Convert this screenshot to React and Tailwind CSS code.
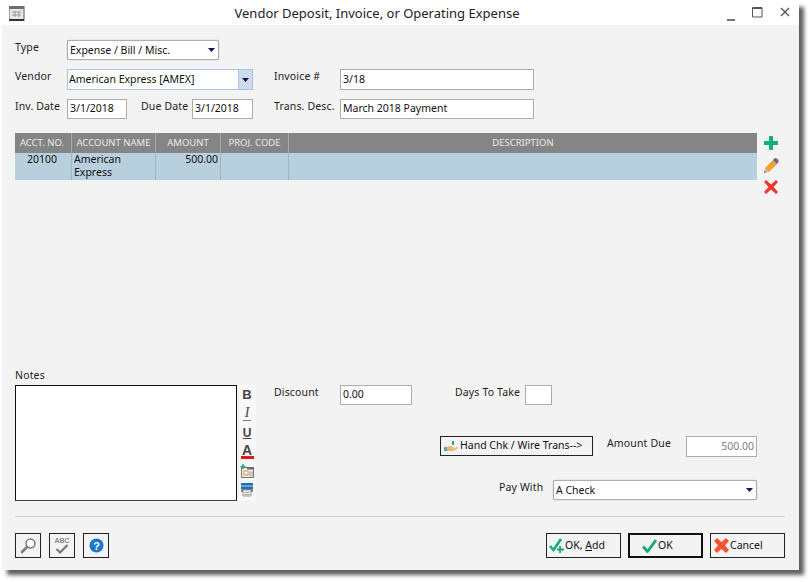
const font = "font-['Noto_Sans',sans-serif]";

function Label({ children, className = "" }) {
  return <div className={`text-[10.5px] leading-[14px] text-[#222] tracking-[0.15px] whitespace-nowrap shrink-0 ${className}`}>{children}</div>;
}

function Field({ children, className = "", right = false, muted = false }) {
  return (
    <div className={`h-[20px] bg-white border border-[#a9adb0] flex items-center px-[2px] text-[10.5px] whitespace-nowrap shrink-0 ${right ? "justify-end" : ""} ${muted ? "text-[#808080]" : "text-[#111]"} ${className}`}>
      {children}
    </div>
  );
}

function Caret() {
  return <svg width="7" height="4" viewBox="0 0 7 4" className="shrink-0"><path d="M0 0h7L3.5 4z" fill="#14145a" /></svg>;
}

function Select({ children, className = "" }) {
  return (
    <div className={`h-[20px] bg-white border border-[#a9adb0] rounded-[2px] shadow-[0_0_1px_#888] flex items-center justify-between pl-[2px] pr-[3px] text-[10.5px] text-[#111] whitespace-nowrap shrink-0 ${className}`}>
      <span className="translate-y-[1px]">{children}</span>
      <Caret />
    </div>
  );
}

function Th({ children, className = "" }) {
  return <div className={`h-full flex items-center justify-center border-r border-[#a8a8a8] text-[9.5px] text-[#e9e9e9] whitespace-nowrap shrink-0 ${className}`}>{children}</div>;
}

function Td({ children, className = "" }) {
  return <div className={`h-full border-r border-[#9fb4c0] text-[10.5px] leading-[13px] text-[#111] pt-[0px] shrink-0 ${className}`}>{children}</div>;
}

function FooterBtn({ children, className = "" }) {
  return (
    <div className={`h-[25px] border border-[#222] bg-[#f3f3f3] flex items-center text-[10.5px] text-[#111] whitespace-nowrap shrink-0 ${className}`}>
      {children}
    </div>
  );
}

function Tool({ children }) {
  return <div className="h-[19px] flex items-center justify-center">{children}</div>;
}

export default function App() {
  return (
    <div className={`w-[812px] h-[582px] bg-white pl-[2px] pt-[2px] overflow-hidden ${font}`}>
      <div className="w-[797px] h-[568px] bg-[#f3f3f3] shadow-[5px_5px_4px_#5f5f5f] flex flex-col">
        {/* title bar */}
        <div className="h-[23px] bg-white flex items-center shrink-0">
          <svg width="16" height="15" viewBox="0 0 16 15" className="ml-[7px] shrink-0">
            <rect x="0" y="0" width="15" height="15" fill="#e8e8e8" stroke="#5a5a5a" />
            <rect x="0" y="0" width="15" height="3" fill="#6e6e6e" />
            <rect x="0" y="13" width="15" height="2" fill="#333" />
            <path d="M3 6h9M3 9h9M6 5v6M10 5v6" stroke="#9a9a9a" />
          </svg>
          <div className="flex-1 text-center text-[13px] text-[#222] pl-[3px]">Vendor Deposit, Invoice, or Operating Expense</div>
          <div className="flex items-center shrink-0 mr-[9px]">
            <svg width="10" height="10" viewBox="0 0 10 10" className="mt-[4px]"><path d="M1 9h8" stroke="#555" strokeWidth="1.6" /></svg>
            <svg width="11" height="11" viewBox="0 0 11 11" className="ml-[16px] -mt-[3px]"><path d="M.5.5h9.5v9.5H.5z" fill="none" stroke="#555" /><path d="M.5 1.5h9.5" stroke="#555" /></svg>
            <svg width="10" height="10" viewBox="0 0 10 10" className="ml-[17px] -mt-[3px]"><path d="M1 1l8 8M9 1l-8 8" stroke="#555" strokeWidth="1.4" /></svg>
          </div>
        </div>

        {/* body */}
        <div className="flex-1 flex flex-col pl-[13px] pr-[14px] pt-[15px] min-h-0">
          <div className="flex items-start">
            <Label className="w-[52px]">Type</Label>
            <Select className="w-[152px]">Expense / Bill / Misc.</Select>
          </div>

          <div className="flex items-start mt-[9px]">
            <Label className="w-[52px]">Vendor</Label>
            <div className="w-[186px] h-[21px] bg-white border border-[#a9c3e2] flex items-center justify-between shrink-0 text-[10.5px] text-[#111]">
              <span className="pl-[1px]">American Express [AMEX]</span>
              <div className="w-[14px] h-full bg-[#cfdcec] border-l border-[#a9c3e2] flex items-center justify-center"><Caret /></div>
            </div>
            <Label className="w-[66px] ml-[21px]">Invoice #</Label>
            <Field className="w-[194px] !h-[21px]">3/18</Field>
          </div>

          <div className="flex items-start mt-[9px]">
            <Label className="w-[52px]">Inv. Date</Label>
            <Field className="w-[60px]">3/1/2018</Field>
            <Label className="w-[51px] ml-[14px]">Due Date</Label>
            <Field className="w-[61px]">3/1/2018</Field>
            <Label className="w-[66px] ml-[21px]">Trans. Desc.</Label>
            <Field className="w-[194px]">March 2018 Payment</Field>
          </div>

          {/* grid */}
          <div className="flex items-start mt-[14px] h-[235px] shrink-0">
            <div className="w-[742px] shrink-0">
              <div className="h-[20px] bg-[#858585] flex">
                <Th className="w-[57px] !pr-[2px]">ACCT. NO.</Th>
                <Th className="w-[84px]">ACCOUNT NAME</Th>
                <Th className="w-[65px]">AMOUNT</Th>
                <Th className="w-[68px]">PROJ. CODE</Th>
                <Th className="flex-1 !border-r-0 !shrink">DESCRIPTION</Th>
              </div>
              <div className="h-[27px] bg-[#b8d0dd] flex">
                <Td className="w-[57px] text-center pr-[2px]">20100</Td>
                <Td className="w-[84px] pl-[2px]">American<br />Express</Td>
                <Td className="w-[65px] text-right pr-[2px]">500.00</Td>
                <Td className="w-[68px]"></Td>
                <div className="flex-1" />
              </div>
            </div>
            <div className="ml-[6px] w-[16px] flex flex-col items-center shrink-0 pt-[2px]">
              <svg width="16" height="16" viewBox="0 0 16 16"><path d="M6 1h4v5h5v4h-5v5H6v-5H1V6h5z" fill="#0fb183" /></svg>
              <svg width="16" height="17" viewBox="0 0 16 17" className="mt-[6px]">
                <path d="M1 16l1-5 4 4z" fill="#c9b9a0" />
                <path d="M1 16l.4-2 1.6 1.6z" fill="#666" />
                <path d="M2 11l8-8 4 4-8 8z" fill="#f0a030" />
                <path d="M10 3l2-2 3 1.4.4 2.6-1.6 2z" fill="#2d6fc0" />
                <path d="M12.6 1.3l2.6 1.3.3 2.4-1.4 1z" fill="#e0483a" />
              </svg>
              <svg width="16" height="16" viewBox="0 0 16 16" className="mt-[5px]"><path d="M3 1l5 4.500L13 1l2 2-4.500 5L15 13l-2 2-5-4.500L3 15l-2-2 4.500-5L1 3z" fill="#f0352c" /></svg>
            </div>
          </div>

          {/* lower */}
          <div className="flex items-start shrink-0">
            <div className="w-[259px] shrink-0">
              <Label className="h-[17px]">Notes</Label>
              <div className="flex">
                <div className="w-[222px] h-[116px] bg-white border border-[#111] border-b-[#444] shrink-0" />
                <div className="w-[17px] h-[116px] ml-[2px] bg-[#f8f8f8] flex flex-col shrink-0 pr-[1px]">
                  <Tool><span className="font-['Liberation_Sans',sans-serif] font-bold text-[13px] leading-none text-[#444]">B</span></Tool>
                  <Tool><span className="font-['Liberation_Serif',serif] italic text-[14px] leading-none text-[#444] border-b border-[#777] px-[2px]">I</span></Tool>
                  <Tool><span className="font-['Liberation_Sans',sans-serif] font-bold text-[12px] leading-[12px] underline text-[#444]">U</span></Tool>
                  <Tool>
                    <span className="font-['Liberation_Sans',sans-serif] font-bold text-[14px] leading-[12px] text-[#444] border-b-[3px] border-[#e81818] w-[13px] text-center">A</span>
                  </Tool>
                  <Tool>
                    <svg width="14" height="14" viewBox="0 0 14 14">
                      <rect x="1.500" y="3.500" width="12" height="10" fill="#eee" stroke="#777" />
                      <path d="M7 3.500h6.500v2H7z" fill="#666" />
                      <rect x="4" y="7" width="4" height="4" fill="#fff" stroke="#e8893a" />
                      <path d="M10 7v6M12 7v6M9 9h4M9 11h4" stroke="#aaa" strokeWidth=".7" />
                      <path d="M3 0v5M.5 2.500h5" stroke="#2aa586" strokeWidth="1.500" />
                    </svg>
                  </Tool>
                  <Tool>
                    <svg width="14" height="15" viewBox="0 0 14 15">
                      <path d="M1 1h12v7H1z" fill="#1f6fb5" />
                      <path d="M1 4h12" stroke="#bfd7ea" strokeWidth="1" />
                      <path d="M1 7h12v3H1z" fill="#8a8a8a" />
                      <path d="M3 8h8v6H3z" fill="#eee" stroke="#777" strokeWidth=".7" />
                      <path d="M4.500 10.500h5M4.500 12.500h5" stroke="#888" strokeWidth=".7" />
                    </svg>
                  </Tool>
                </div>
              </div>
            </div>

            <div className="flex-1 pt-[17px] min-w-0">
              <div className="flex items-start">
                <Label className="w-[66px]">Discount</Label>
                <Field className="w-[72px]">0.00</Field>
                <Label className="w-[70px] ml-[43px]">Days To Take</Label>
                <Field className="w-[27px]" />
              </div>
              <div className="flex items-start mt-[31px] ml-[166px]">
                <div className="w-[153px] h-[20px] border border-[#222] bg-[#f3f3f3] flex items-center text-[10.5px] text-[#111] whitespace-nowrap shrink-0">
                  <svg width="14" height="12" viewBox="0 0 14 12" className="ml-[3px] shrink-0">
                    <path d="M0 7h3v4H0z" fill="#5aa6c9" />
                    <path d="M3 7c3-2 5 0 7 0l-1 2 4-2c1 0 1 1 0 2l-4 2H3z" fill="#edb572" />
                    <path d="M8 1h2v4H8z" fill="#3aa06a" />
                  </svg>
                  <span className="ml-[2px]">Hand Chk / Wire Trans--&gt;</span>
                </div>
                <Label className="w-[79px] ml-[14px]">Amount Due</Label>
                <Field className="w-[71px] !h-[21px]" right muted>500.00</Field>
              </div>
              <div className="flex items-start mt-[23px] ml-[225px]">
                <Label className="w-[54px]">Pay With</Label>
                <Select className="w-[204px]">A Check</Select>
              </div>
            </div>
          </div>

          <div className="h-[1px] bg-[#cfcfcf] mt-[15px] shrink-0" />

          <div className="flex items-center mt-[16px]">
            <FooterBtn className="w-[26px] justify-center">
              <svg width="17" height="17" viewBox="0 0 17 17">
                <circle cx="10.500" cy="6.500" r="4.500" fill="#fbfbfb" stroke="#7d7d7d" strokeWidth="1.500" />
                <path d="M7 10l-5 5" stroke="#7d7d7d" strokeWidth="2.600" strokeLinecap="round" />
              </svg>
            </FooterBtn>
            <FooterBtn className="w-[26px] justify-center ml-[8px] flex-col">
              <span className="font-['Liberation_Sans',sans-serif] font-bold text-[7px] leading-[7px] text-[#888]">ABC</span>
              <svg width="14" height="10" viewBox="0 0 14 10"><path d="M1.500 5l3.500 3.500L12.500 1" fill="none" stroke="#777" strokeWidth="2.200" /></svg>
            </FooterBtn>
            <FooterBtn className="w-[26px] justify-center ml-[8px]">
              <svg width="15" height="15" viewBox="0 0 15 15">
                <circle cx="7.500" cy="7.500" r="7" fill="#1b78c8" />
                <text x="7.500" y="11.500" textAnchor="middle" fontSize="11" fontWeight="bold" fontFamily="Liberation Sans" fill="#fff">?</text>
              </svg>
            </FooterBtn>
            <div className="flex-1" />
            <FooterBtn className="w-[75px]">
              <svg width="16" height="17" viewBox="0 0 16 17" className="ml-[2px] shrink-0">
                <path d="M1 9l3.500 4L12 2" fill="none" stroke="#12a97f" strokeWidth="2.600" />
                <path d="M11 9v7M8 12.500h7" stroke="#12a97f" strokeWidth="1.800" />
              </svg>
              <span>OK, <span className="underline">A</span>dd</span>
            </FooterBtn>
            <FooterBtn className="w-[75px] ml-[7px] border-2 !border-[#111]">
              <svg width="15" height="14" viewBox="0 0 15 14" className="ml-[12px] shrink-0">
                <path d="M1 7.500l4.500 5L14 1" fill="none" stroke="#12a97f" strokeWidth="2.800" />
              </svg>
              <span className="ml-[1px]">OK</span>
            </FooterBtn>
            <FooterBtn className="w-[75px] ml-[7px]">
              <svg width="15" height="15" viewBox="0 0 15 15" className="ml-[3px] shrink-0">
                <path d="M3 0l4.500 4L12 0l3 3-4 4.500 4 4.500-3 3-4.500-4L3 15l-3-3 4-4.500L0 3z" fill="#f4552e" />
              </svg>
              <span className="ml-[1px]">Cancel</span>
            </FooterBtn>
          </div>
        </div>
      </div>
    </div>
  );
}
